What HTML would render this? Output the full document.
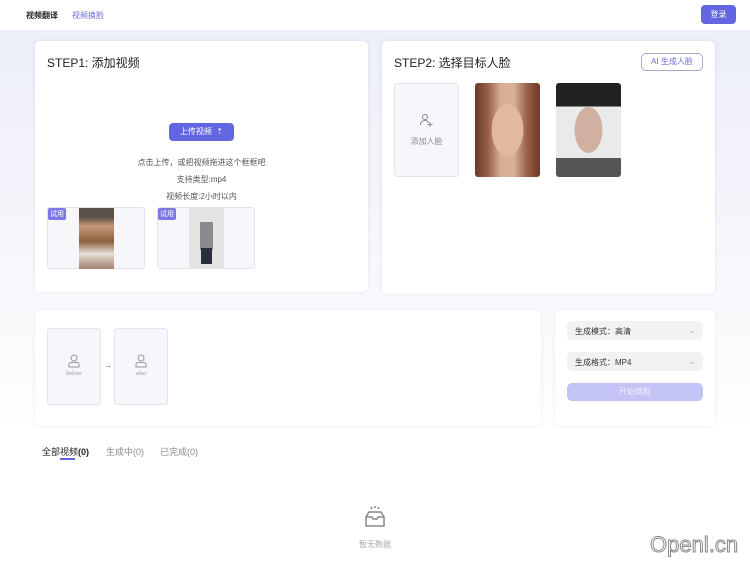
<!DOCTYPE html>
<html><head><meta charset="utf-8"><style>
*{box-sizing:border-box;margin:0;padding:0}
body{width:750px;height:562px;overflow:hidden;font-family:"Liberation Sans","Noto Sans CJK SC",sans-serif;background:linear-gradient(180deg,#eceef9 30px,#f4f4fb 200px,#fff 430px);position:relative;color:#333}
.abs{position:absolute}
.hdr{left:0;top:0;width:750px;height:30px;background:#fff}
.card{background:#fff;border-radius:5px;box-shadow:0 0 4px rgba(120,120,160,.15)}
.t{font-size:12px;color:#222}
.c{font-size:8px;color:#555;text-align:center}
.thumb{background:#f6f6fb;border:1px solid #e4e4ee;border-radius:3px}
.tag{background:#7b78e6;color:#fff;font-size:7px;padding:1px 2px;left:0;top:0;border-radius:2px}
.sel{background:#f2f2f4;border-radius:5px;font-size:8px;color:#333;padding:6px 8px}
</style></head><body>
<div class="abs hdr"></div>
<div class="abs" style="left:26px;top:10px;font-size:8px;color:#222;font-weight:bold">视频翻译</div>
<div class="abs" style="left:72px;top:10px;font-size:8px;color:#6b6bd6">视频换脸</div>
<div class="abs" style="left:701px;top:5px;width:35px;height:19px;background:#6366e0;border-radius:4px;color:#fff;font-size:8px;text-align:center;line-height:19px">登录</div>

<div class="abs card" style="left:35px;top:41px;width:333px;height:251px"></div>
<div class="abs t" style="left:47px;top:54px">STEP1: 添加视频</div>
<div class="abs" style="left:169px;top:123px;width:65px;height:18px;background:#6366e0;border-radius:4px;color:#fff;font-size:8px;text-align:center;line-height:18px">上传视频 &nbsp;⇡</div>
<div class="abs c" style="left:35px;top:157px;width:333px">点击上传，或把视频拖进这个框框吧</div>
<div class="abs c" style="left:35px;top:174px;width:333px">支持类型:mp4</div>
<div class="abs c" style="left:35px;top:191px;width:333px">视频长度:2小时以内</div>
<div class="abs thumb" style="left:47px;top:207px;width:98px;height:62px"><div class="abs" style="left:31px;top:0;width:35px;height:61px;background:linear-gradient(180deg,#5a5048 0 15%,#c89878 30%,#8a6040 55%,#e8e0d8 75%,#a08070)"></div><div class="abs tag">试用</div></div>
<div class="abs thumb" style="left:157px;top:207px;width:98px;height:62px"><div class="abs" style="left:31px;top:0;width:35px;height:61px;background:#e4e4e2"><div class="abs" style="left:11px;top:14px;width:13px;height:28px;background:#8a8a8e"></div><div class="abs" style="left:12px;top:40px;width:11px;height:16px;background:#2a2e3a"></div></div><div class="abs tag">试用</div></div>

<div class="abs card" style="left:382px;top:41px;width:333px;height:253px"></div>
<div class="abs t" style="left:394px;top:54px">STEP2: 选择目标人脸</div>
<div class="abs" style="left:641px;top:53px;width:62px;height:18px;border:1px solid #a9a9cc;border-radius:5px;font-size:8px;color:#6b6bd6;text-align:center;line-height:16px">AI 生成人脸</div>
<div class="abs thumb" style="left:394px;top:83px;width:65px;height:94px"></div>
<svg class="abs" style="left:419px;top:113px" width="15" height="15" viewBox="0 0 15 15" fill="none" stroke="#888" stroke-width="1"><circle cx="6" cy="4" r="2.5"/><path d="M1.5 12c0-3 2-4.5 4.5-4.5S9 8.5 9.5 10M11 9v5M8.5 11.5h5"/></svg>
<div class="abs c" style="left:394px;top:136px;width:65px;color:#888">添加人脸</div>
<div class="abs" style="left:475px;top:83px;width:65px;height:94px;border-radius:3px;background:radial-gradient(ellipse 40% 45% at 50% 50%,#e2b8a0 60%,transparent 62%),linear-gradient(90deg,#6a3a28,#9a6048 20%,#d8b098 40%,#d8b098 60%,#9a6048 80%,#6a3a28)"></div>
<div class="abs" style="left:556px;top:83px;width:65px;height:94px;border-radius:3px;background:radial-gradient(ellipse 35% 40% at 50% 50%,#d0b0a0 60%,transparent 62%),linear-gradient(180deg,#222 0 25%,#eaeaea 25%,#eaeaea 80%,#555 80%)"></div>

<div class="abs card" style="left:35px;top:310px;width:506px;height:116px"></div>
<div class="abs thumb" style="left:47px;top:328px;width:54px;height:77px"></div>
<div class="abs thumb" style="left:114px;top:328px;width:54px;height:77px"></div>
<svg class="abs" style="left:67px;top:354px" width="14" height="14" viewBox="0 0 14 14" fill="none" stroke="#999"><circle cx="7" cy="4" r="3"/><path d="M2 13v-2.5a2 2 0 0 1 2-2h6a2 2 0 0 1 2 2V13z"/></svg>
<svg class="abs" style="left:134px;top:354px" width="14" height="14" viewBox="0 0 14 14" fill="none" stroke="#999"><circle cx="7" cy="4" r="3"/><path d="M2 13v-2.5a2 2 0 0 1 2-2h6a2 2 0 0 1 2 2V13z"/></svg>
<div class="abs c" style="left:47px;top:371px;width:54px;font-size:6px;color:#999;font-family:'Liberation Serif',serif">before</div>
<div class="abs c" style="left:114px;top:371px;width:54px;font-size:6px;color:#999;font-family:'Liberation Serif',serif">after</div>
<div class="abs" style="left:104px;top:361px;font-size:8px;color:#666">→</div>

<div class="abs card" style="left:555px;top:310px;width:160px;height:116px"></div>
<div class="abs sel" style="left:567px;top:321px;width:136px;height:19px;padding-top:5px">生成模式：高清<span style="float:right;color:#aaa">⌄</span></div>
<div class="abs sel" style="left:567px;top:352px;width:136px;height:19px;padding-top:5px">生成格式：MP4<span style="float:right;color:#aaa">⌄</span></div>
<div class="abs" style="left:567px;top:383px;width:136px;height:18px;background:#c4c3f6;border-radius:5px;color:#eef;font-size:8px;text-align:center;line-height:18px">开始换脸</div>

<div class="abs" style="left:42px;top:445px;font-size:9px;color:#222">全部视频<b>(0)</b></div>
<div class="abs" style="left:60px;top:458px;width:15px;height:2px;background:#6366e0"></div>
<div class="abs" style="left:106px;top:445px;font-size:9px;color:#888">生成中(0)</div>
<div class="abs" style="left:160px;top:445px;font-size:9px;color:#888">已完成(0)</div>

<svg class="abs" style="left:362px;top:505px" width="26" height="26" viewBox="0 0 26 26" fill="none" stroke="#888" stroke-width="1.5"><path d="M4 12l3-5h12l3 5v9H4z M4 12h6l1 2h4l1-2h6 M9 2l1 2M13 1v2M17 2l-1 2"/></svg>
<div class="abs c" style="left:340px;top:539px;width:70px;color:#aaa">暂无数据</div>
<div class="abs" style="left:650px;top:532px;font-size:22px;color:#fff;-webkit-text-stroke:1px #888;font-family:'Liberation Sans',sans-serif">Openl.cn</div>
</body></html>
